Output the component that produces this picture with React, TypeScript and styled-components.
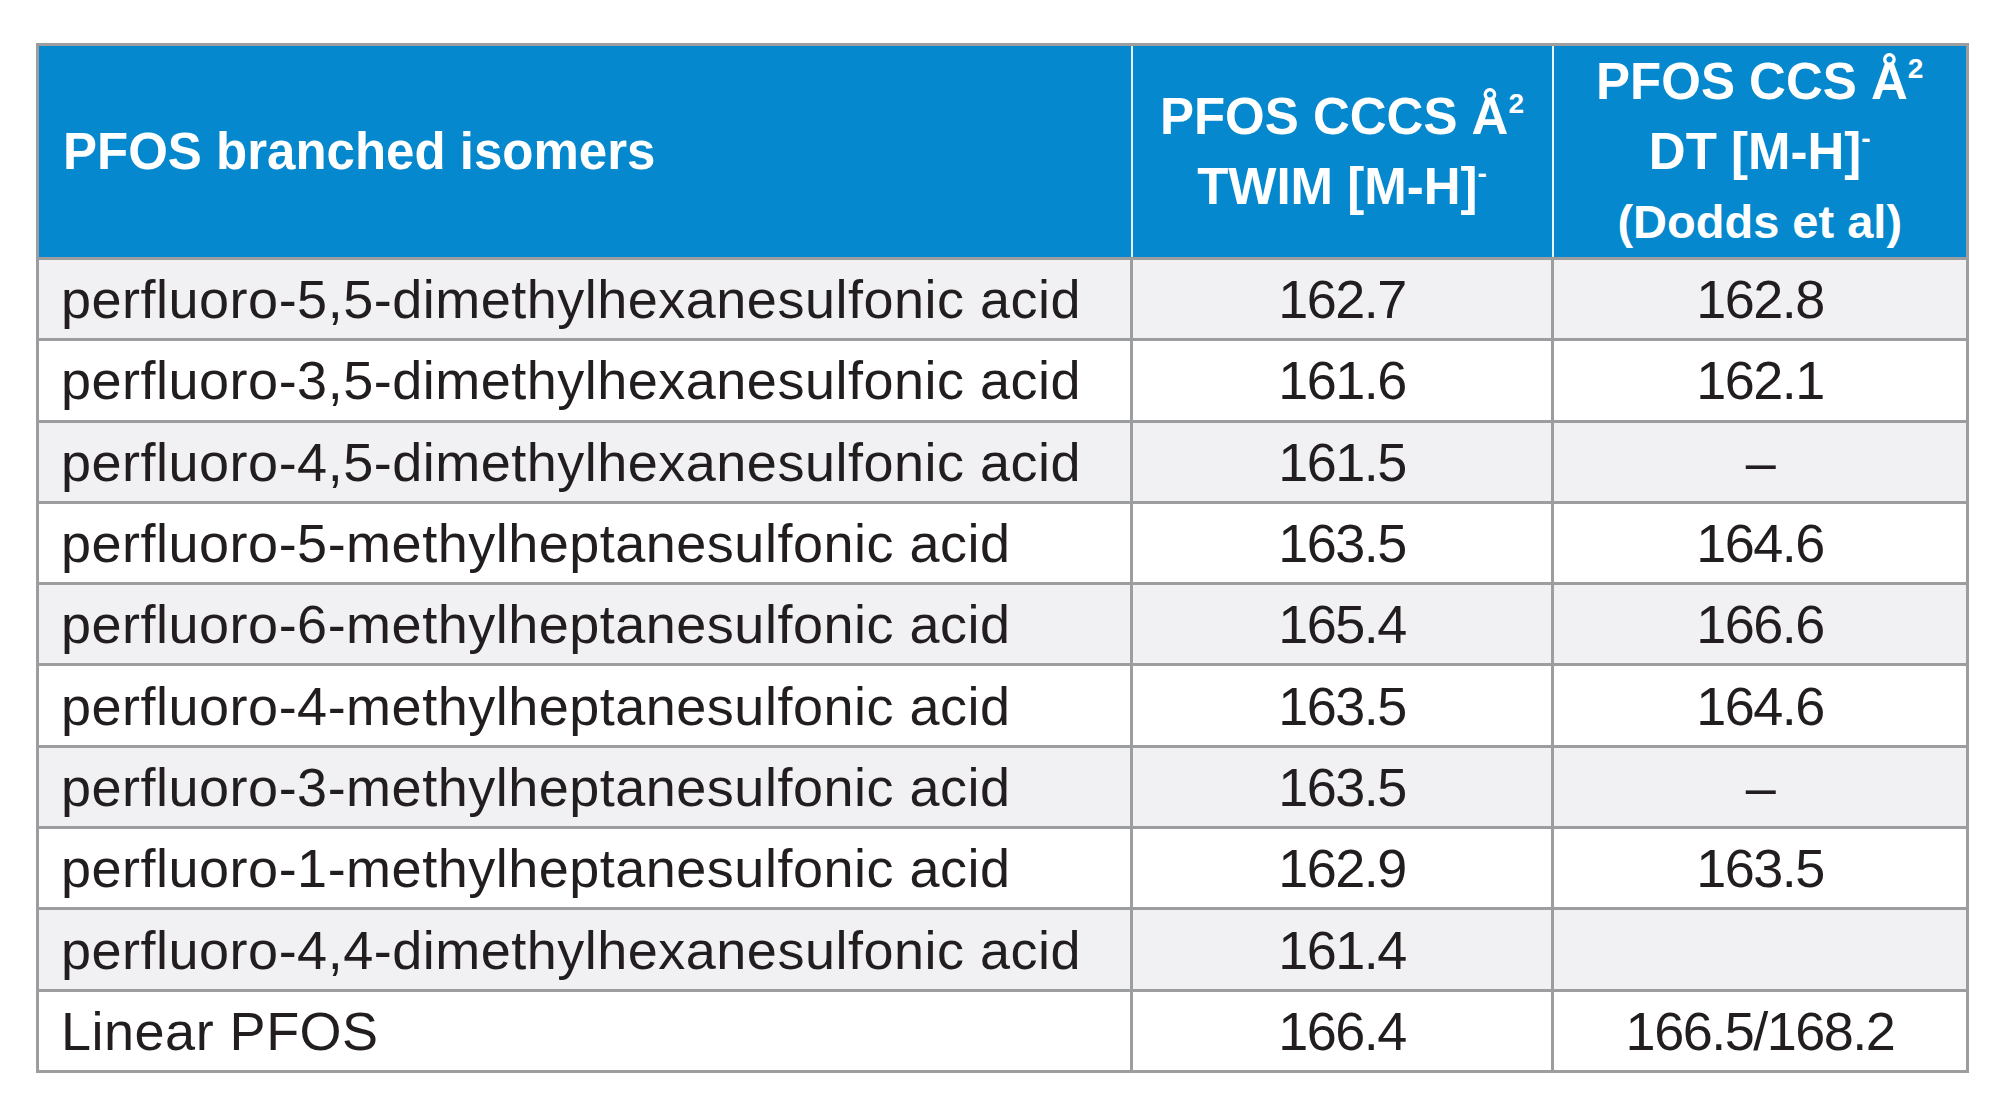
import React from "react";
import styled, { createGlobalStyle } from "styled-components";

const GlobalStyle = createGlobalStyle`
  html, body { margin: 0; padding: 0; background: #ffffff; }
  body { font-family: "Liberation Sans", Arial, sans-serif; }
`;

const Page = styled.div`
  padding: 43px 33px 0 36px;
`;

const Table = styled.table`
  width: 1930px;
  border-collapse: collapse;
  table-layout: fixed;
  border: 3px solid #9c9d9f;
`;

const HeadCell = styled.th<{ $align?: "left" | "center" }>`
  height: 211px;
  padding: 0 ${(p) => (p.$align === "left" ? "24px" : "8px")};
  background: #0588cd;
  color: #ffffff;
  font-weight: 700;
  font-size: 51px;
  line-height: 70px;
  text-align: ${(p) => p.$align || "center"};
  vertical-align: middle;
  border-left: 2px solid #e8f3fa;
  border-bottom: 3px solid #9c9d9f;
  &:first-child { border-left: none; }
`;

const Row = styled.tr<{ $shade: boolean }>`
  background: ${(p) => (p.$shade ? "#f1f1f3" : "#ffffff")};
`;

const Cell = styled.td<{ $align?: "left" | "center" }>`
  height: 78.3px;
  padding: 0 ${(p) => (p.$align === "left" ? "22px" : "8px")};
  color: #221e1f;
  font-size: 54px;
  letter-spacing: ${(p) => (p.$align === "left" ? "0.5px" : "-1.5px")};
  text-align: ${(p) => p.$align || "center"};
  vertical-align: middle;
  white-space: nowrap;
  border: 3px solid #9c9d9f;
`;

const Sup = styled.sup`
  font-size: 0.55em;
  line-height: 0;
  vertical-align: 0.75em;
  letter-spacing: 0;
`;

const HeadLine = styled.div<{ $small?: boolean }>`
  white-space: nowrap;
  font-size: ${(p) => (p.$small ? "47px" : "inherit")};
`;

type IsomerRow = { name: string; twim: string; dt: string };

const rows: IsomerRow[] = [
  { name: "perfluoro-5,5-dimethylhexanesulfonic acid", twim: "162.7", dt: "162.8" },
  { name: "perfluoro-3,5-dimethylhexanesulfonic acid", twim: "161.6", dt: "162.1" },
  { name: "perfluoro-4,5-dimethylhexanesulfonic acid", twim: "161.5", dt: "–" },
  { name: "perfluoro-5-methylheptanesulfonic acid", twim: "163.5", dt: "164.6" },
  { name: "perfluoro-6-methylheptanesulfonic acid", twim: "165.4", dt: "166.6" },
  { name: "perfluoro-4-methylheptanesulfonic acid", twim: "163.5", dt: "164.6" },
  { name: "perfluoro-3-methylheptanesulfonic acid", twim: "163.5", dt: "–" },
  { name: "perfluoro-1-methylheptanesulfonic acid", twim: "162.9", dt: "163.5" },
  { name: "perfluoro-4,4-dimethylhexanesulfonic acid", twim: "161.4", dt: "" },
  { name: "Linear PFOS", twim: "166.4", dt: "166.5/168.2" },
];

export default function App() {
  return (
    <Page>
      <GlobalStyle />
      <Table>
        <colgroup>
          <col style={{ width: 1094 }} />
          <col style={{ width: 421 }} />
          <col style={{ width: 415 }} />
        </colgroup>
        <thead>
          <tr>
            <HeadCell $align="left">PFOS branched isomers</HeadCell>
            <HeadCell>
              <HeadLine>PFOS CCCS Å<Sup>2</Sup></HeadLine>
              <HeadLine>TWIM [M-H]<Sup>-</Sup></HeadLine>
            </HeadCell>
            <HeadCell>
              <HeadLine>PFOS CCS Å<Sup>2</Sup></HeadLine>
              <HeadLine>DT [M-H]<Sup>-</Sup></HeadLine>
              <HeadLine $small>(Dodds et al)</HeadLine>
            </HeadCell>
          </tr>
        </thead>
        <tbody>
          {rows.map((r, i) => (
            <Row key={r.name} $shade={i % 2 === 0}>
              <Cell $align="left">{r.name}</Cell>
              <Cell>{r.twim}</Cell>
              <Cell>{r.dt}</Cell>
            </Row>
          ))}
        </tbody>
      </Table>
    </Page>
  );
}
